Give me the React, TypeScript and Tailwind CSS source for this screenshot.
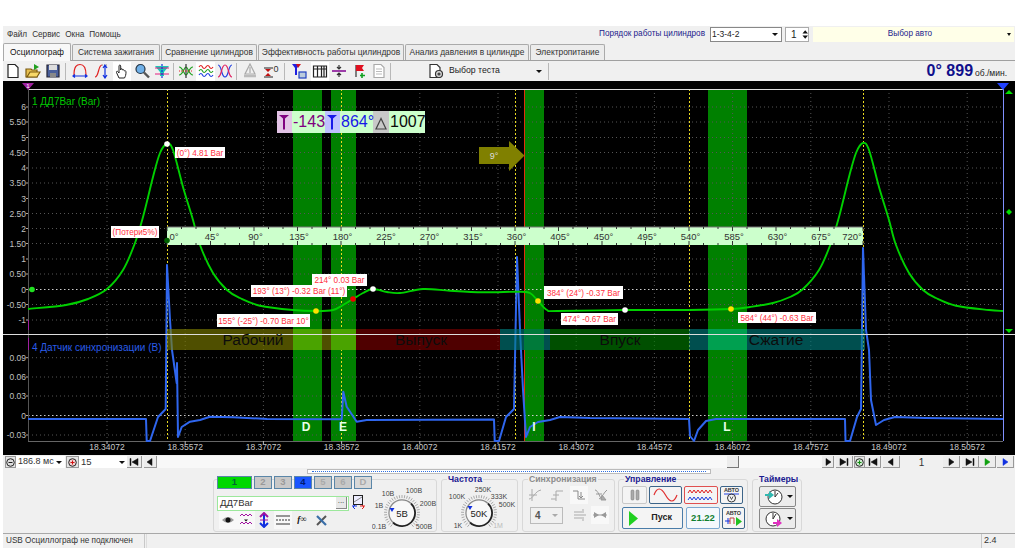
import React from "react";

const smooth = (p: number[][]) => {
  let d = `M${p[0][0]} ${p[0][1]}`;
  for (let i = 0; i < p.length - 1; i++) {
    const a = p[Math.max(i - 1, 0)], b = p[i], c = p[i + 1], e = p[Math.min(i + 2, p.length - 1)];
    d += ` C${(b[0] + (c[0] - a[0]) / 6).toFixed(1)} ${(b[1] + (c[1] - a[1]) / 6).toFixed(1)} ${(c[0] - (e[0] - b[0]) / 6).toFixed(1)} ${(c[1] - (e[1] - b[1]) / 6).toFixed(1)} ${c[0]} ${c[1]}`;
  }
  return d;
};

const green = [[28,309],[66,305],[88,299],[107,289],[123,270],[135,243],[143,217],[153,177],[160,153],[167,144],[173,150],[183,187],[193,220],[200,245],[213,273],[227,290],[240,298],[260,305.7],[293,310],[317,311],[333,310],[343,305],[353,299],[363,293],[373,289],[387,292],[400,293],[423,289],[450,290.7],[483,292.3],[517,291.7],[530,293],[538,301],[547,310],[557,311],[625,310],[689,310],[731,309],[750,307],[773,303],[790,297],[803,289],[819,270],[831,243],[839,217],[849,177],[856,153],[863,143],[869,150],[879,187],[889,220],[896,245],[909,273],[923,290],[936,298],[956,305.7],[989,310],[1003,311]];

const blue = "28,419 146,419 146.7,441 150,441 158,417 165.7,409 167,265 170,320 172,350 176.7,383 177,363 178,437 181.7,427 190,421.7 200,420 210,416.7 233,417.3 267,419 341.7,419.3 343.3,391.7 346.7,406.7 356.7,421.7 366.7,420 494,419.5 494.7,441 499,441 506,417 514,409 517,257 520,330 523,390 526,437 530,427 538,422 550,420 560,417 590,418 689,419 690,436 694,441 698,430 706,421 716,419 845,419 845.5,441 850,441 857,417 861,409 863,248 866,330 869,350 871,400 876,425 884,420 895,417 925,418 1003,419";

const yL = [["6",107],["5.50",122],["5",137.5],["4.50",152.5],["4",168],["3.50",183],["3",198.5],["2.50",213.5],["2",228.5],["1.50",243.5],["1",259],["0.50",274],["0",289.5],["-0.50",304.5],["-1",320]] as [string, number][];
const yB = [["0.09",357.7],["0.06",377],["0.03",396],["0",415.5],["-0.03",435]] as [string, number][];
const times = ["18.34072","18.35572","18.37072","18.38572","18.40072","18.41572","18.43072","18.44572","18.46072","18.47572","18.49072","18.50572"];

const notes: [string, number, number, number, number][] = [
  ["(0°) 4.81 Bar",175,147,50,11],["(Потери5%)",111,226,48,12],["214° 0.03 Bar",312,274,55,12],
  ["193° (13°) -0.32 Bar (11°)",251,285,96,12],["155° (-25°) -0.70 Bar 10°",217,314,93,13],
  ["384° (24°) -0.37 Bar",544,286,79,13],["474° -0.67 Bar",561,313,57,12],["584° (44°) -0.63 Bar",738,312,78,11],
];

function Chart() {
  return (
    <svg viewBox="3 81 1012 374" className="block w-full h-[374px] bg-black">
      {[[293,29],[331,25],[524,20],[708,39]].map(([x,w])=><rect key={x} x={x} y={89} width={w} height={352} fill="#008000"/>)}
      {times.map((_,i)=><line key={i} x1={107+78.2*i} x2={107+78.2*i} y1={89} y2={441} stroke="#555" strokeDasharray="1 3"/>)}
      {[...yL,...yB].map(([t,y])=>t==="0"?null:<line key={t+y} x1={28} x2={1003} y1={y} y2={y} stroke="#555" strokeDasharray="1 3"/>)}
      <line x1={28} x2={1003} y1={289.5} y2={289.5} stroke="#ccc" strokeDasharray="1.5 2.5"/>
      <line x1={28} x2={1003} y1={415.5} y2={415.5} stroke="#ccc" strokeDasharray="1.5 2.5"/>
      {[167,341,515,689,863].map(x=><line key={x} x1={x+.5} x2={x+.5} y1={89} y2={441} stroke="#e8d820" strokeDasharray="2 2"/>)}
      <line x1={524.5} x2={524.5} y1={89} y2={441} stroke="#e03010"/>
      <line x1={28} x2={1003} y1={89.5} y2={89.5} stroke="#ddd"/>
      <line x1={28.5} x2={28.5} y1={89} y2={441} stroke="#555"/>
      <line x1={28.5} x2={28.5} y1={320} y2={330} stroke="#a020a0"/>
      <line x1={28.5} x2={28.5} y1={338} y2={350} stroke="#a020a0"/>
      <line x1={1003.5} x2={1003.5} y1={89} y2={441} stroke="#8090ff"/>
      <line x1={28} x2={1003} y1={441.5} y2={441.5} stroke="#666"/>
      <polygon points="22,83 34,83 28,90" fill="#a020a0"/>
      <text x={28} y={88} textAnchor="middle" fontSize={6} fill="#fff">1</text>
      <polygon points="997,83 1009,83 1003,90" fill="#2040ff"/>
      <polygon points="1009,90 1005,94 1013,94" fill="#00e000"/>
      <polygon points="1009,209 1012,212 1009,215 1006,212" fill="#00e000"/>
      <polygon points="1005,329 1013,329 1009,333" fill="#00e000"/>
      {[...yL,...yB].map(([t,y])=><g key={t+y}><text x={26} y={y+3} textAnchor="end" fontSize={8.5} fill="#c0c0c0">{t}</text><line x1={26} x2={28} y1={y} y2={y} stroke="#aaa"/></g>)}
      {times.map((t,i)=><g key={t}><line x1={107+78.2*i} x2={107+78.2*i} y1={441} y2={444} stroke="#bbb"/><text x={107+78.2*i} y={450} textAnchor="middle" fontSize={8.5} fill="#c8c8c8">{t}</text></g>)}
      <text x={32} y={105} fontSize={10} fill="#00c800">1 ДД7Bar (Bar)</text>
      <text x={32} y={351} fontSize={10} fill="#2a5ce8">4 Датчик синхронизации (В)</text>
      <polyline points={blue} fill="none" stroke="#2f66ee" strokeWidth={2} strokeLinejoin="round"/>
      <path d={smooth(green)} fill="none" stroke="#00d000" strokeWidth={1.9}/>
      <rect x={167} y={329} width={189} height={21} fill="#808000" fillOpacity={.62}/>
      <rect x={356} y={329} width={144} height={21} fill="#800000" fillOpacity={.62}/>
      <rect x={500} y={329} width={50} height={21} fill="#008080" fillOpacity={.62}/>
      <rect x={550} y={329} width={139} height={21} fill="#008000" fillOpacity={.62}/>
      <rect x={689} y={329} width={176} height={21} fill="#008080" fillOpacity={.62}/>
      <rect x={293} y={329} width={29} height={21} fill="#4aa300"/>
      <rect x={331} y={329} width={25} height={21} fill="#4aa300"/>
      <rect x={524} y={329} width={20} height={21} fill="#007a3a"/>
      <rect x={708} y={329} width={39} height={21} fill="#00a050"/>
      <line x1={3} x2={1015} y1={334.5} y2={334.5} stroke="#ddd"/>
      {[["Рабочий",253],["Выпуск",421],["Впуск",620],["Сжатие",776]].map(([t,x])=><text key={t as string} x={x as number} y={345} textAnchor="middle" fontSize={15.5} fill="#0c0c0c">{t}</text>)}
      <rect x={167} y={227} width={696} height={18} fill="#ccffcc"/>
      <line x1={167} x2={863} y1={227} y2={227} stroke="#777"/>
      {Array.from({length:49},(_,i)=><g key={i} stroke="#333"><line x1={167+14.5*i} x2={167+14.5*i} y1={227} y2={i%3===0?231:229}/><line x1={167+14.5*i} x2={167+14.5*i} y1={245} y2={i%3===0?241:243}/></g>)}
      {Array.from({length:17},(_,i)=><text key={i} x={i===0?174:i===16?852:168.5+43.5*i} y={240} textAnchor="middle" fontSize={9.5} fill="#333">{45*i}°</text>)}
      <polygon points="479,147 509,147 509,141 524.5,155.5 509,171 509,164 479,164" fill="#808000"/>
      <text x={494} y={159} textAnchor="middle" fontSize={9} fill="#ddd">9°</text>
      {[["D",306],["E",343],["I",534],["L",727]].map(([t,x])=><text key={t as string} x={x as number} y={431} textAnchor="middle" fontSize={12} fontWeight={700} fill="#e8ffe8">{t}</text>)}
      <rect x={277} y={111} width={15} height={22} fill="#e3c3e6"/>
      <rect x={292} y={111} width={33} height={22} fill="#ccffcc"/>
      <rect x={325} y={111} width={15} height={22} fill="#bfc0ff"/>
      <rect x={340} y={111} width={33} height={22} fill="#ccffcc"/>
      <rect x={373} y={111} width={16} height={22} fill="#c8c8c8"/>
      <rect x={389} y={111} width={36} height={22} fill="#ccffcc"/>
      <path d="M279 115h10l-4 3.5v11h-2v-11z" fill="#800080"/>
      <path d="M327 115h10l-4 3.5v11h-2v-11z" fill="#1818e8"/>
      <path d="M381 118.5l-5 10.5h10z" fill="none" stroke="#444" strokeWidth={1.2}/>
      <text x={293} y={127} fontSize={16} fill="#800080">-143</text>
      <text x={341} y={127} fontSize={16} fill="#1818e8">864°</text>
      <text x={390} y={127} fontSize={16} fill="#0a0a0a">1007</text>
      {notes.map(([t,x,y,w,h])=><g key={t}><rect x={x} y={y} width={w} height={h} fill="#fff"/><text x={x+w/2} y={y+h/2+3} textAnchor="middle" fontSize={8.2} fill="#ff3040">{t}</text></g>)}
      {[[167,144,"#fff"],[167,240.5,"#006000"],[32,289.5,"#20e020"],[316,311,"#ffe000"],[353,299,"#f00000"],[373,289,"#fff"],[538,301,"#ffe000"],[625,310,"#fff"],[731,309,"#ffe000"]].map(([x,y,c])=><circle key={`${x}`} cx={x as number} cy={y as number} r={2.8} fill={c as string}/>)}
    </svg>
  );
}

const S = ({ children, w = 16 }: { children: React.ReactNode; w?: number }) => (
  <svg viewBox={`0 0 ${w} 16`} width={w} height={16} fill="none" strokeWidth={1.2}>{children}</svg>
);

const toolIcons: Record<string, React.ReactNode> = {
  doc: <S><path d="M3 1.500h7l3 3v10H3z" fill="#fff" stroke="#222"/></S>,
  open: <S><path d="M1 6h5l1 1h5v7H1z" fill="#e8c050" stroke="#7a5a10"/><path d="M2 14l3-5h10l-3 5z" fill="#f8d868" stroke="#7a5a10"/><path d="M9 1l5 3-5 3z" fill="#20a020"/></S>,
  save: <S><path d="M2 2h12v12H2z" fill="#4a5f9a" stroke="#223"/><path d="M4 2h8v5H4z" fill="#ddd"/><path d="M5 10h6v4H5z" fill="#888"/></S>,
  arch: <S><path d="M2 12C2 3 5 1.500 8 1.500S14 3 14 12" stroke="#e02020"/><path d="M1 13h14M3 11.500L1 13l2 1.500M13 11.500l2 1.500-2 1.500" stroke="#1030e0"/></S>,
  span: <S><path d="M1 14C5 14 4 2 8 2" stroke="#e02020"/><path d="M8 2h6" stroke="#888" strokeDasharray="1 1"/><path d="M11 3v11M9 5l2-3 2 3M9 12l2 3 2-3" stroke="#1030e0"/></S>,
  hand: <S><path d="M5 15L2.500 9.500c-.5-1 .8-1.700 1.500-.7L5 10V3c0-1.300 1.700-1.300 1.700 0v4l.3-1c.6-.7 1.500-.3 1.500.5l.2.5c.6-.7 1.500-.3 1.500.5l.3.5c.7-.6 1.500 0 1.500.7 0 3-.5 4.500-1.500 6.300z" fill="#fff" stroke="#222" strokeWidth={1}/></S>,
  mag: <S><circle cx="6.500" cy="6" r="4.500" fill="#6fb0e8" stroke="#234"/><path d="M10 9.500l5 5" stroke="#555" strokeWidth={2.400}/></S>,
  teal: <S><path d="M1 3h14L10 9v4H6V9z" fill="#18c8b8"/><path d="M1 5h14M1 11h14" stroke="#e02080"/><path d="M8 1v14" stroke="#1030e0" strokeDasharray="2 1"/></S>,
  cross: <S><path d="M1 12C5 12 6 4 8 4s3 8 7 8M1 4c4 0 5 8 7 8s3-8 7-8" stroke="#20a020"/><path d="M8 1v14" stroke="#333"/><path d="M1 8h14" stroke="#e02020" strokeDasharray="1 1"/></S>,
  waves: <S><path d="M1 4q2-3 3.500 0t3.500 0 3.500 0 3.500 0" stroke="#e02020"/><path d="M1 8q2-3 3.500 0t3.500 0 3.500 0 3.500 0" stroke="#20a020"/><path d="M1 12q2-3 3.500 0t3.500 0 3.500 0 3.500 0" stroke="#2040e0"/></S>,
  loops: <S><path d="M1 2c4 0 3 12 7 12S11 2 15 2" stroke="#2040e0"/><path d="M1 14c4 0 3-12 7-12s3 12 7 12" stroke="#e02060"/></S>,
  auto: <S><path d="M8 1l5 10H3z" stroke="#aaa"/><path d="M8 4v6" stroke="#aaa"/><path d="M2 13h12" stroke="#bbb" strokeWidth={2.500}/></S>,
  zero: <S w={20}><path d="M3 5h9M3 14h9" stroke="#222"/><path d="M4 6l3 3 3-3zM4 13l3-3 3 3z" fill="#c01010"/><text x="12.500" y="9" fontSize="9" fill="#333">0</text></S>,
  filter: <S><path d="M1 1h8L6 5v7H4V5z" fill="#2020e0"/><path d="M5 1h5L7 5z" fill="#d01020"/><rect x="8" y="9" width="7" height="6" fill="#bcd" stroke="#2040c0"/></S>,
  table: <S><path d="M1.500 3h13v11h-13zM1.500 6h13M5.500 3v11M9.500 3v11M12 3v11" stroke="#222"/></S>,
  div: <S><path d="M1 8h14" stroke="#800090" strokeWidth={1.500}/><path d="M8 2v3M6 4l2 2 2-2M8 14v-3M6 12l2-2 2 2" stroke="#333"/></S>,
  flag: <S><path d="M5 2v12" stroke="#333"/><path d="M5 2h8l-2 3 2 3H5z" fill="#e01020"/><path d="M11 10v5M9 12.500h5" stroke="#10a020" strokeWidth={1.600}/></S>,
  sheet: <S><path d="M3 1.500h7l3 3v10H3z" fill="#fff" stroke="#aaa"/><path d="M5 6h6M5 8.500h6M5 11h6" stroke="#bbb"/></S>,
  test: <S><path d="M2 1.500h7l3 3v10H2z" fill="#fff" stroke="#333"/><circle cx="11" cy="11" r="3.500" fill="#ddd" stroke="#333"/><circle cx="11" cy="11" r="1" fill="#fff" stroke="#333"/></S>,
};

const T = ({ n, w = 20, on }: { n: string; w?: number; on?: boolean }) => (
  <div style={{ width: w }} className={`h-[19px] flex items-center justify-center ${on ? "bg-white" : ""}`}>{toolIcons[n]}</div>
);
const Sep = () => <div className="w-px h-[17px] bg-[#b8b8b8] mx-[2px]" />;

function Knob({ w, cx, cy, val, labels, off, mark }: { w: number; cx: number; cy: number; val: string; labels: [string, number, number, string?][]; off?: boolean; mark: [number, number] }) {
  return (
    <svg width={w} height={52} viewBox={`0 0 ${w} 52`} className="shrink-0">
      {Array.from({length:33},(_,i)=>{const a=(130+i*8.75)*Math.PI/180;return <line key={i} x1={cx+Math.cos(a)*15} y1={cy+Math.sin(a)*15} x2={cx+Math.cos(a)*18} y2={cy+Math.sin(a)*18} stroke={off?"#888":"#aaa"}/>})}
      <circle cx={cx} cy={cy} r={12} fill="#f8f8f8"/>
      <path d={`M${cx+9} ${cy-9.500}A13 13 0 1 1 ${cx-9} ${cy+9.500}`} stroke="#222" strokeWidth={1.800} fill="none"/>
      <path d={`M${cx-9} ${cy+9.500}A13 13 0 0 1 ${cx+9} ${cy-9.500}`} stroke="#888" strokeWidth={1.200} fill="none"/>
      <polygon points={`${mark[0]-2.500},${mark[1]} ${mark[0]+2.500},${mark[1]} ${mark[0]},${mark[1]+4}`} fill="#1030e0"/>
      <text x={cx} y={cy+3.500} textAnchor="middle" fontSize={9.500} fill="#222">{val}</text>
      {labels.map(([t,x,y,c])=><text key={t} x={x} y={y} textAnchor="middle" fontSize={7} fill={c||"#444"}>{t}</text>)}
    </svg>
  );
}

const Nav = ({ w, d, c = "#111" }: { w: number; d: string; c?: string }) => (
  <div style={{ width: w }} className="h-[12px] bg-[#ececec] border-r border-b border-[#999] flex items-center justify-center">
    <svg width={10} height={8} viewBox="0 0 10 8"><path d={d} fill={c} stroke={c} strokeWidth={.5}/></svg>
  </div>
);
const pPrev = "M7 0.500v7L2 4z", pNext = "M3 0.500v7L8 4z", pFirst = "M1 0.500h1v7H1zM9 0.500v7L3 4z", pLast = "M9 0.500H8v7h1zM1 0.500v7L7 4z";
const Add = () => <div className="w-[11px] h-[12px] bg-[#e4e4e4] border border-[#999] flex items-center justify-center"><svg width={9} height={9} viewBox="0 0 9 9"><circle cx="4.500" cy="4.500" r="3.800" fill="#cfe8cf" stroke="#222"/><path d="M2.500 4.500h4M4.500 2.500v4" stroke="#109010"/></svg></div>;

const Ch = ({ t, cls }: { t: string; cls: string }) => (
  <div className={`h-[13px] flex items-center justify-center text-[9.5px] font-bold border border-[#5a86a8] ${cls}`}>{t}</div>
);
const Title = ({ t, gray }: { t: string; gray?: boolean }) => (
  <div className={`h-[10px] -mt-[6px] ml-[5px] px-[1px] text-[8.7px] leading-[10px] font-bold self-start bg-[#f0f0f0] ${gray ? "text-[#8c8c8c]" : "text-[#1a1a90]"}`}>{t}</div>
);
const Ctl = ({ cls, children }: { cls: string; children?: React.ReactNode }) => (
  <div className={`rounded-[2px] flex items-center justify-center border bg-[#f4f4f4] ${cls}`}>{children}</div>
);
const G = ({ children, on }: { children: React.ReactNode; on?: boolean }) => (
  <div className={`w-[18px] h-[18px] flex items-center justify-center ${on ? "bg-[#f8f8f8]" : ""}`}>{children}</div>
);

export default function App() {
  return (
    <div className="w-[1024px] h-[551px] bg-white pt-[26px] pl-[3px] pr-[9px] overflow-hidden font-['Liberation_Sans',Arial,sans-serif] text-[10px] text-[#222]">
      <div className="h-[522px] bg-[#f0f0f0] flex flex-col">
        {/* menu */}
        <div className="h-[17px] flex items-center pl-[4px]">
          <div className="flex gap-[5px] text-[8.2px] text-[#333] pt-[2px]"><span>Файл</span><span>Сервис</span><span>Окна</span><span>Помощь</span></div>
          <span className="ml-auto text-[#1c1c8c] text-[8.2px] mr-[5px]">Порядок работы цилиндров</span>
          <div className="w-[72px] h-[15px] bg-white border border-[#888] flex items-center px-[1px] text-[8.5px]"><span>1-3-4-2</span><span className="ml-auto mr-[2px] border-x-[3px] border-x-transparent border-t-[3px] border-t-[#111]"></span></div>
          <div className="w-[24px] h-[15px] ml-[3px] bg-white border border-[#aaa] flex items-center pl-[5px] text-[10px]"><span>1</span><svg className="ml-[5px]" width={7} height={11} viewBox="0 0 7 11"><path d="M3.500 1l3 3.500H.5zM3.500 10l3-3.500H.5z" fill="#111"/></svg></div>
          <div className="w-[201px] h-[15px] ml-[4px] mr-[1px] bg-[#ffffe8] flex items-center text-[#1c1c8c] text-[8.2px]"><span className="flex-1 text-center">Выбор авто</span><span className="mr-[3px] border-x-[2px] border-x-transparent border-t-[3px] border-t-[#111]"></span></div>
        </div>
        {/* tabs */}
        <div className="h-[18px] flex items-end border-b border-[#a0a0a0] text-[8.4px]">
          <div className="w-[68px] h-[18px] bg-[#f8f8f8] border border-b-0 border-[#aaa] rounded-t-[2px] flex items-center justify-center text-[#111] -mb-px z-10">Осциллограф</div>
          {[["Система зажигания",88,"ml-[1px]"],["Сравнение цилиндров",96,"ml-[1px]"],["Эффективность работы цилиндров",146,"ml-[1px]"],["Анализ давления в цилиндре",124,"ml-[1px]"],["Электропитание",75,"ml-[1px]"]].map(([t,w,m])=>(
            <div key={t as string} style={{width:w as number}} className={`h-[16px] bg-[#ececec] border border-b-0 border-[#aaa] rounded-t-[2px] flex items-center justify-center text-[#333] whitespace-nowrap ${m}`}>{t}</div>
          ))}
        </div>
        {/* toolbar */}
        <div className="h-[20px] flex items-center">
          <T n="doc"/><T n="open"/><T n="save"/><Sep/><T n="arch" w={23}/><T n="span" w={22}/><T n="hand" w={18} on/><T n="mag" w={21}/><T n="teal" w={19}/><Sep/>
          <T n="cross"/><T n="waves" w={19} on/><T n="loops" w={19}/><Sep/><T n="auto" w={21}/><T n="zero" w={22}/><Sep/><T n="filter" w={24}/><T n="table" w={18} on/><T n="div"/><T n="flag"/><T n="sheet" w={19}/><Sep/>
          <div className="w-[33px]"></div><T n="test" w={20}/><span className="text-[8.7px] text-[#222] ml-[3px]">Выбор теста</span>
          <span className="ml-[36px] border-x-[3px] border-x-transparent border-t-[3px] border-t-[#111]"></span>
          <div className="ml-[4px]"><Sep/></div>
          <div className="ml-auto mr-[8px] flex items-baseline"><span className="text-[#10108c] font-bold text-[16px] leading-[18px]">0° 899</span><span className="text-[#222] text-[8.5px] ml-[2px]">об./мин.</span></div>
        </div>
        {/* chart */}
        <div className="h-[374px] shrink-0"><Chart/></div>
        {/* controls */}
        <div className="h-[78px] shrink-0 flex flex-col">
          <div className="h-[13px] mt-px flex items-start pl-[2px]">
            <div className="w-[11px] h-[12px] bg-[#e4e4e4] border border-[#999] flex items-center justify-center"><svg width={9} height={9} viewBox="0 0 9 9"><circle cx="4.500" cy="4.500" r="3.800" fill="#ddd" stroke="#222"/><path d="M2.500 4.500h4" stroke="#222"/></svg></div>
            <div className="w-[49px] h-[12px] bg-white flex items-center pl-[2px] text-[9px] text-[#333] whitespace-nowrap"><span>186.8 мс</span><span className="ml-auto mr-[3px] border-x-[3px] border-x-transparent border-t-[3px] border-t-[#111]"></span></div>
            <div className="w-[13px] h-[12px] ml-px bg-[#e4e4e4] border border-[#999] flex items-center justify-center"><svg width={9} height={9} viewBox="0 0 9 9"><circle cx="4.500" cy="4.500" r="3.800" fill="#f0d0d0" stroke="#222"/><path d="M2.500 4.500h4M4.500 2.500v4" stroke="#d01010"/></svg></div>
            <div className="w-[48px] h-[12px] bg-white flex items-center pl-[2px] text-[9.5px] text-[#333]"><span>15</span><span className="ml-auto mr-[2px] border-x-[3px] border-x-transparent border-t-[3px] border-t-[#111]"></span></div>
            <Nav w={15} d={pFirst}/><div className="w-[2px]"></div><Nav w={13} d={pPrev}/>
            <div className="w-[570px] h-[12px] bg-[#f8f8f8]"></div>
            <div className="w-[12px] h-[12px] bg-[#ececec] border-r border-b border-[#777]"></div>
            <div className="w-[83px] h-[12px] bg-[#f8f8f8]"></div>
            <Nav w={12} d={pNext}/><div className="w-[2px]"></div><Nav w={17} d={pLast}/><div className="w-px"></div><Add/><Nav w={16} d={pFirst}/><div className="w-[2px]"></div><Nav w={17} d={pPrev}/>
            <div className="w-[43px] h-[12px] flex items-center justify-center text-[10px] text-[#333]">1</div>
            <Nav w={17} d={pNext}/><div className="w-[2px]"></div><Nav w={17} d={pLast}/><Nav w={17} d={pNext} c="#10a010"/><div className="w-px"></div><Nav w={17} d={pNext} c="#1030e0"/>
          </div>
          <div className="h-[5px] ml-[304px] w-[404px] bg-white border border-[#bbb] flex items-center"><div className="flex-1 mx-[4px] border-t border-dotted border-[#3070e0]"></div></div>
          {/* panels */}
          <div className="mt-[5px] pl-[210px] flex gap-[4px] items-start">
            <div className="w-[224px] h-[53px] border border-[#d8d8d8] rounded-[3px] flex">
              <div className="w-[158px] pl-[3px] shrink-0">
                <div className="flex gap-[2px] -mt-[4px] h-[13px]">
                  <Ch t="1" cls="w-[35px] bg-[#00d800] text-[#063]"/><Ch t="2" cls="w-[18px] bg-[#c8c8c8] text-[#999]"/><Ch t="3" cls="w-[18px] bg-[#c8c8c8] text-[#999]"/><Ch t="4" cls="w-[18px] bg-[#1a56ff] text-[#001a70]"/><Ch t="5" cls="w-[18px] bg-[#c8c8c8] text-[#aaa]"/><Ch t="6" cls="w-[18px] bg-[#c8c8c8] text-[#aaa]"/><Ch t="D" cls="w-[18px] bg-[#d8d8d8] text-[#aaa]"/>
                </div>
                <div className="flex items-center mt-[6px]">
                  <div className="w-[132px] h-[15px] bg-white border border-[#9ce89c] flex items-center pl-[2px] text-[9.5px] text-[#333]"><span>ДД7Bar</span><div className="ml-auto w-[11px] h-[12px] mr-px bg-[#e8e8e8] border-r border-b border-[#888] text-[8px] leading-[8px] text-center">...</div></div>
                  <svg className="ml-[2px]" width={15} height={16} viewBox="0 0 15 16" fill="none"><rect x="2.500" y=".5" width="9" height="9" fill="#eef" stroke="#222"/><path d="M3 7l8-5" stroke="#888"/><path d="M1 11h5M4 10l-2 2 2 2" stroke="#1030e0"/><path d="M14 11H9M11 10l2 2-2 2" stroke="#e02020"/></svg>
                </div>
                <div className="flex items-center">
                  <div className="ml-[2px]"><G on><svg width={12} height={8} viewBox="0 0 12 8"><path d="M0 4q6-6 12 0q-6 6-12 0z" fill="#999"/><circle cx="6" cy="4" r="2.500" fill="#111"/></svg></G></div>
                  <G on><svg width={14} height={14} viewBox="0 0 14 14" fill="none"><path d="M1 3l2-2 2 2 2-2 2 2 2-2 2 2" stroke="#a010a0"/><path d="M1 11l2-2 2 2 2-2 2 2 2-2 2 2" stroke="#a010a0"/><path d="M5 6.500h4L7 8.500z" fill="#111"/></svg></G>
                  <G><svg width={12} height={16} viewBox="0 0 12 16" fill="none"><path d="M6 1v14" stroke="#1030e0" strokeWidth="2"/><path d="M2 5l4-4 4 4" stroke="#a010a0" strokeWidth="2"/><path d="M2 11l4 4 4-4" stroke="#1030e0" strokeWidth="2"/><path d="M2 8h8" stroke="#a010a0"/></svg></G>
                  <div className="ml-[1px]"><G on><svg width={14} height={12} viewBox="0 0 14 12" stroke="#333"><path d="M0 2h14M0 10h14"/><path d="M0 6h14" strokeDasharray="2 1"/></svg></G></div>
                  <div className="w-[20px] text-center text-[9px] font-bold italic font-['Liberation_Serif',serif] text-[#111]">f∞</div>
                  <G><svg width={13} height={13} viewBox="0 0 13 13" fill="none"><path d="M2 11L11 2" stroke="#555" strokeWidth="2"/><path d="M2 2l9 9" stroke="#3a6ea8" strokeWidth="2.200"/></svg></G>
                </div>
              </div>
              <Knob w={65} cx={30} cy={33} val="5В" mark={[20,28]} labels={[["10В",16,16],["100В",42,13],["1В",7,28],["200В",56,26],["0.1В",7,49],["500В",52,49]]}/>
            </div>
            <div className="w-[77px] h-[53px] border border-[#d8d8d8] rounded-[3px] flex flex-col">
              <Title t="Частота"/>
              <div className="-mt-[5px]"><Knob w={77} cx={37} cy={34} val="50K" mark={[28,27]} labels={[["250K",41,13],["100K",15,20],["333K",57,20],["500K",65,28],["1K",16,49],["1M",56,49,"#bbb"]]}/></div>
            </div>
            <div className="w-[93px] h-[53px] border border-[#d8d8d8] rounded-[3px] flex flex-col">
              <Title t="Синхронизация" gray/>
              <div className="flex items-center pl-[3px] gap-[4px] mt-[2px]">
                <G><svg width={14} height={14} viewBox="0 0 14 14" fill="none" stroke="#aaa"><path d="M1 11c4 0 6-8 12-9M4 1v12M1 7h8"/></svg></G>
                <G><svg width={14} height={14} viewBox="0 0 14 14" fill="none" stroke="#aaa"><path d="M1 11h5V3h7M6 11v2M3 7h6"/></svg></G>
                <G on><svg width={14} height={14} viewBox="0 0 14 14" fill="none" stroke="#888"><path d="M1 3h5v8h7M9 4v6M7 8l2 2 2-2"/></svg></G>
                <G><svg width={14} height={14} viewBox="0 0 14 14" fill="none" stroke="#999"><path d="M1 2c3 0 5 8 7 10M13 2c-3 2-5 8-8 9M2 6h6" /><path d="M8 7l4 5H7z" fill="#aaa"/></svg></G>
              </div>
              <div className="flex items-center pl-[7px] mt-[2px]">
                <div className="w-[33px] h-[17px] border border-[#bbb] flex items-center pl-[4px] font-bold text-[#555] text-[10px]"><span>4</span><span className="ml-auto mr-[4px] border-x-[3px] border-x-transparent border-t-[3px] border-t-[#aaa]"></span></div>
                <div className="ml-[8px]"><G><svg width={14} height={14} viewBox="0 0 14 14" fill="none" stroke="#aaa"><path d="M1 4h8M1 7h12M1 10h8M10 1v4M10 9v4"/></svg></G></div>
                <div className="ml-[2px]"><G on><svg width={14} height={8} viewBox="0 0 14 8" fill="#999"><path d="M0 4h14" stroke="#999"/><path d="M1 1l5 3-5 3zM13 1L8 4l5 3z"/></svg></G></div>
              </div>
            </div>
            <div className="w-[130px] h-[53px] border border-[#d8d8d8] rounded-[3px] flex flex-col -ml-[1px]">
              <Title t="Управление"/>
              <div className="flex gap-[2px] pl-[3px] mt-[2px]">
                <Ctl cls="w-[25px] h-[18px] border-[#c8c8c8]"><svg width={10} height={12} viewBox="0 0 10 12"><rect x="1" y="1" width="3" height="10" rx="1" fill="#aaa" stroke="#777" strokeWidth=".5"/><rect x="6" y="1" width="3" height="10" rx="1" fill="#aaa" stroke="#777" strokeWidth=".5"/></svg></Ctl>
                <Ctl cls="w-[33px] h-[18px] border-[#3c6488]"><svg width={25} height={14} viewBox="0 0 25 14" fill="none"><path d="M1 7C4-1 8-1 12.500 7S21 15 24 7" stroke="#e03030" strokeWidth="1.200"/></svg></Ctl>
                <Ctl cls="w-[34px] h-[18px] border-[#e05050]"><svg width={28} height={14} viewBox="0 0 28 14" fill="none"><path d="M1 5l2-3 2 3 2-3 2 3 2-3 2 3 2-3 2 3 2-3 2 3 2-3 2 3" stroke="#e02020"/><path d="M1 12l2-3 2 3 2-3 2 3 2-3 2 3 2-3 2 3 2-3 2 3 2-3 2 3" stroke="#2040e0"/></svg></Ctl>
                <Ctl cls="w-[23px] h-[18px] border-[#3c6488]"><svg width={19} height={16} viewBox="0 0 19 16" fill="none"><text x="9.500" y="5" textAnchor="middle" fontSize="5.500" fontWeight="700" fill="#333">АВТО</text><path d="M2 7h15" stroke="#2040e0"/><circle cx="9.500" cy="11" r="4" stroke="#333"/><path d="M8 9.500l1.500 3 1.500-3" stroke="#333" strokeWidth=".8"/></svg></Ctl>
              </div>
              <div className="flex gap-[3px] pl-[3px] mt-[3px]">
                <Ctl cls="w-[61px] h-[22px] border-[#4a7ca8]"><svg className="ml-[5px]" width={11} height={15} viewBox="0 0 11 15"><path d="M1 0l9 7.500L1 15z" fill="#20d020"/></svg><span className="ml-auto mr-[10px] text-[9px] font-bold text-[#222]">Пуск</span></Ctl>
                <Ctl cls="w-[34px] h-[22px] border-[#7ca8d0] bg-[#f4f8fc] text-[9.5px] font-bold text-[#108030]">21.22</Ctl>
                <Ctl cls="w-[23px] h-[22px] -ml-px border-[#3c6488]"><svg width={19} height={18} viewBox="0 0 19 18" fill="none"><text x="9.500" y="6" textAnchor="middle" fontSize="5.500" fontWeight="700" fill="#333">АВТО</text><path d="M1 12h5M4 9v6" stroke="#1030e0"/><path d="M6 15V9h4v6" stroke="#c04040"/><path d="M12 8l6 4.500-6 4.500z" fill="#20c020"/></svg></Ctl>
              </div>
            </div>
            <div className="w-[50px] h-[53px] border border-[#d8d8d8] rounded-[3px] flex flex-col items-center">
              <Title t="Таймеры"/>
              <div className="mt-[2px] w-[37px] h-[21px] bg-[#ececec] border border-[#888] rounded-[2px] flex items-center pl-[5px]"><svg width={18} height={18} viewBox="0 0 18 18" fill="none"><circle cx="10" cy="9" r="7" fill="#fff" stroke="#333"/><path d="M10 9l3-4M10 9V3" stroke="#333"/><path d="M0 6h4V3l5 4-5 4V8H0z" fill="#30b8b0"/></svg><span className="ml-[4px] border-x-[3px] border-x-transparent border-t-[3px] border-t-[#111]"></span></div>
              <div className="mt-[1px] w-[37px] h-[21px] bg-[#ececec] border border-[#888] rounded-[2px] flex items-center pl-[5px]"><svg width={18} height={18} viewBox="0 0 18 18" fill="none"><circle cx="8" cy="9" r="7" fill="#fff" stroke="#333"/><path d="M8 9l3-5M8 9V3" stroke="#333"/><path d="M8 12h4V9l5 4-5 4v-3H8z" fill="#e030c0"/></svg><span className="ml-[4px] border-x-[3px] border-x-transparent border-t-[3px] border-t-[#111]"></span></div>
            </div>
          </div>
        </div>
        {/* status */}
        <div className="h-[15px] shrink-0 border-t border-[#a8a8a8] flex items-center text-[8.2px] text-[#333]">
          <div className="w-[142px] pl-[3px] h-full flex items-center border-r border-[#c8c8c8] whitespace-nowrap">USB Осциллограф не подключен</div>
          <div className="flex-1 h-full ml-px border-l border-[#ddd]"></div>
          <div className="w-[34px] h-full pl-[2px] flex items-center border-l border-[#c8c8c8] text-[9px]">2.4</div>
        </div>
      </div>
    </div>
  );
}
